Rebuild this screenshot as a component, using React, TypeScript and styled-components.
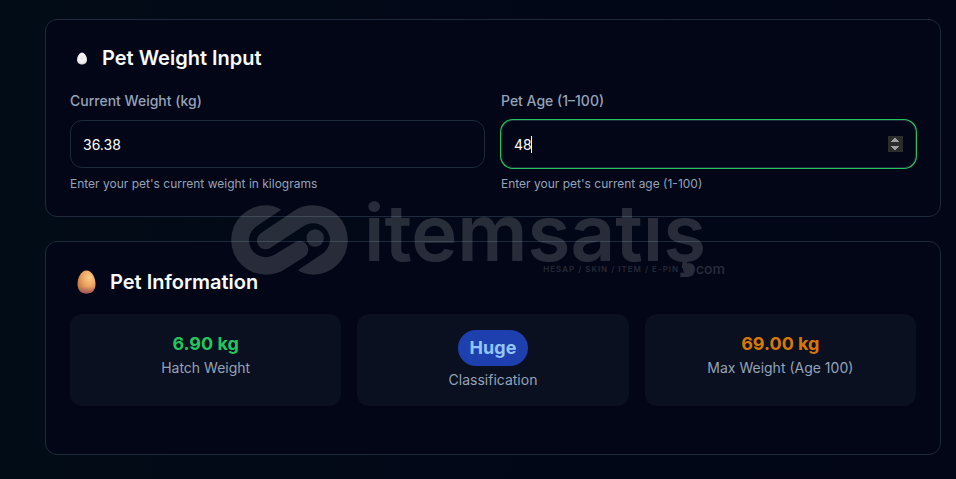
import React, { useState } from "react";
import styled, { createGlobalStyle, css } from "styled-components";

const GlobalStyle = createGlobalStyle`
  *, *::before, *::after { box-sizing: border-box; }
  html { color-scheme: dark; background: #020617; }
  body {
    margin: 0;
    font-family: Inter, "Liberation Sans", sans-serif;
    color: #f8fafc;
  }
`;

const Page = styled.main`
  position: relative;
  display: flex;
  flex-direction: column;
  gap: 24px;
  min-height: 100vh;
  padding: 19px 15px 24px 45px;
  background: linear-gradient(90deg, #020c16 0%, #020817 45%, #020617 100%);
`;

const Card = styled.section`
  padding: 24px;
  border: 1px solid #1e293b;
  border-radius: 12px;
  background: #020617;
`;

const Heading = styled.h2<{ $size: "small" | "large" }>`
  display: flex;
  align-items: center;
  gap: 8px;
  margin: 0 0 ${(p) => (p.$size === "small" ? 20 : 16)}px;
  font-size: 20px;
  line-height: ${(p) => (p.$size === "small" ? 28 : 32)}px;
  font-weight: 600;
`;

const IconSlot = styled.span<{ $width: number }>`
  display: flex;
  justify-content: center;
  width: ${(p) => p.$width}px;
`;

const FieldGrid = styled.div`
  display: grid;
  grid-template-columns: repeat(2, minmax(0, 1fr));
  gap: 16px;
`;

const Field = styled.div`
  display: flex;
  flex-direction: column;
  gap: 8px;
`;

const Label = styled.label`
  margin-bottom: 2px;
  color: #94a3b8;
  font-size: 14px;
  line-height: 18px;
  font-weight: 500;
`;

const InputFrame = styled.div`
  position: relative;
`;

const NumberInput = styled.input<{ $active?: boolean }>`
  display: block;
  width: 100%;
  height: 48px;
  padding: 0 12px;
  border: 1px solid #1e293b;
  border-radius: 12px;
  outline: none;
  background: #020617;
  color: #ffffff;
  font: 400 14px/20px Inter, "Liberation Sans", sans-serif;
  ${(p) =>
    p.$active &&
    css`
      box-shadow: 0 0 0 1px #22c55e;
    `}
  &::-webkit-inner-spin-button {
    opacity: ${(p) => (p.$active ? 1 : 0)};
  }
`;

const Caret = styled.span`
  position: absolute;
  top: 16px;
  left: 30px;
  width: 1px;
  height: 17px;
  background: #ffffff;
`;

const Hint = styled.p`
  margin: 0;
  color: #94a3b8;
  font-size: 12px;
  line-height: 16px;
`;

const StatGrid = styled.div`
  display: grid;
  grid-template-columns: repeat(3, minmax(0, 1fr));
  gap: 16px;
  margin-bottom: 24px;
`;

const Stat = styled.div`
  display: flex;
  flex-direction: column;
  align-items: center;
  padding: 16px;
  border-radius: 12px;
  background: #0a101f;
`;

const Value = styled.strong<{ $color: string }>`
  color: ${(p) => p.$color};
  font-size: 18px;
  line-height: 28px;
  font-weight: 700;
`;

const Pill = styled(Value)`
  margin-bottom: 4px;
  padding: 4px 12px;
  border-radius: 18px;
  background: #1e40af;
`;

const StatLabel = styled.span`
  color: #94a3b8;
  font-size: 14px;
  line-height: 20px;
`;

const Watermark = styled.div`
  position: absolute;
  top: 50%;
  left: 50%;
  display: flex;
  gap: 16px;
  width: 494px;
  transform: translate(-50%, -50%);
  pointer-events: none;
  opacity: 0.15;
  color: #ffffff;
`;

const Wordmark = styled.div`
  display: flex;
  flex-direction: column;
  flex: 1;
  height: 70px;
`;

const BrandName = styled.span`
  height: 58px;
  font-size: 78px;
  line-height: 55px;
  font-weight: 600;
`;

const Tagline = styled.span`
  display: flex;
  justify-content: flex-end;
  align-items: center;
  height: 12px;
  line-height: 12px;
  white-space: pre;
`;

const Services = styled.span`
  font-size: 8px;
  font-weight: 500;
  letter-spacing: 1px;
`;

const Dot = styled.i`
  width: 12px;
  height: 12px;
  margin: 0 1px 0 4px;
  border-radius: 50%;
  background: currentColor;
`;

const DotCom = styled.span`
  font-size: 14px;
  font-weight: 500;
`;

function WhiteEgg() {
  return (
    <svg width="10" height="13" viewBox="0 0 20 26" aria-hidden="true">
      <defs>
        <radialGradient id="white-egg" cx="50%" cy="45%" r="60%">
          <stop offset="0" stopColor="#e8e6e8" />
          <stop offset="0.6" stopColor="#f6f4f5" />
          <stop offset="1" stopColor="#c9c5c9" />
        </radialGradient>
      </defs>
      <path d="M10 1C15 1 20 9 20 16C20 22 15 25 10 25S0 22 0 16C0 9 5 1 10 1Z" fill="url(#white-egg)" />
    </svg>
  );
}

const EGG = "M19 1C30 1 37 16 37 28C37 41 29 47 19 47S1 41 1 28C1 16 8 1 19 1Z";

function BrownEgg() {
  return (
    <svg width="19" height="24" viewBox="0 0 38 48" aria-hidden="true">
      <defs>
        <radialGradient id="brown-egg" cx="66%" cy="30%" r="78%">
          <stop offset="0" stopColor="#ffcb84" />
          <stop offset="0.5" stopColor="#eca462" />
          <stop offset="1" stopColor="#b87045" />
        </radialGradient>
        <linearGradient id="brown-egg-shade" x1="0" y1="0" x2="0" y2="1">
          <stop offset="0.72" stopColor="#a0525c" stopOpacity="0" />
          <stop offset="1" stopColor="#a0525c" stopOpacity="0.85" />
        </linearGradient>
      </defs>
      <path d={EGG} fill="url(#brown-egg)" />
      <path d={EGG} fill="url(#brown-egg-shade)" />
    </svg>
  );
}

function Mark() {
  return (
    <svg width="117" height="70" viewBox="33 43 350 210" fill="currentColor" aria-hidden="true">
      <path d="M183 57C168 48 153 44 137 44A104 104 0 0 0 137 252C158 252 177 247 194 236L252 199A26 26 0 0 0 226 154L165 191A50 50 0 1 1 109 107Z" />
      <path d="M233 239C248 248 262 252 279 252A104 104 0 0 0 279 44C258 44 239 49 222 60L123 127A26 26 0 0 0 150 172L251 106A50 50 0 1 1 307 189Z" />
      <circle cx="285" cy="142" r="26" />
    </svg>
  );
}

export default function App() {
  const [weight, setWeight] = useState("36.38");
  const [age, setAge] = useState("48");

  return (
    <>
      <GlobalStyle />
      <Page>
        <Card>
          <Heading $size="small">
            <IconSlot $width={24}><WhiteEgg /></IconSlot>
            Pet Weight Input
          </Heading>
          <FieldGrid>
            <Field>
              <Label htmlFor="weight">Current Weight (kg)</Label>
              <NumberInput id="weight" type="number" step="0.01" value={weight} onChange={(e) => setWeight(e.target.value)} />
              <Hint>Enter your pet's current weight in kilograms</Hint>
            </Field>
            <Field>
              <Label htmlFor="age">Pet Age (1–100)</Label>
              <InputFrame>
                <NumberInput $active id="age" type="number" min="1" max="100" value={age} onChange={(e) => setAge(e.target.value)} />
                <Caret />
              </InputFrame>
              <Hint>Enter your pet's current age (1-100)</Hint>
            </Field>
          </FieldGrid>
        </Card>
        <Card>
          <Heading $size="large">
            <IconSlot $width={32}><BrownEgg /></IconSlot>
            Pet Information
          </Heading>
          <StatGrid>
            <Stat>
              <Value $color="#22c55e">6.90 kg</Value>
              <StatLabel>Hatch Weight</StatLabel>
            </Stat>
            <Stat>
              <Pill $color="#93c5fd">Huge</Pill>
              <StatLabel>Classification</StatLabel>
            </Stat>
            <Stat>
              <Value $color="#d97706">69.00 kg</Value>
              <StatLabel>Max Weight (Age 100)</StatLabel>
            </Stat>
          </StatGrid>
        </Card>
        <Watermark>
          <Mark />
          <Wordmark>
            <BrandName>itemsatış</BrandName>
            <Tagline>
              <Services>HESAP / SKIN / ITEM / E-PIN</Services>
              <Dot />
              <DotCom>com</DotCom>
            </Tagline>
          </Wordmark>
        </Watermark>
      </Page>
    </>
  );
}
